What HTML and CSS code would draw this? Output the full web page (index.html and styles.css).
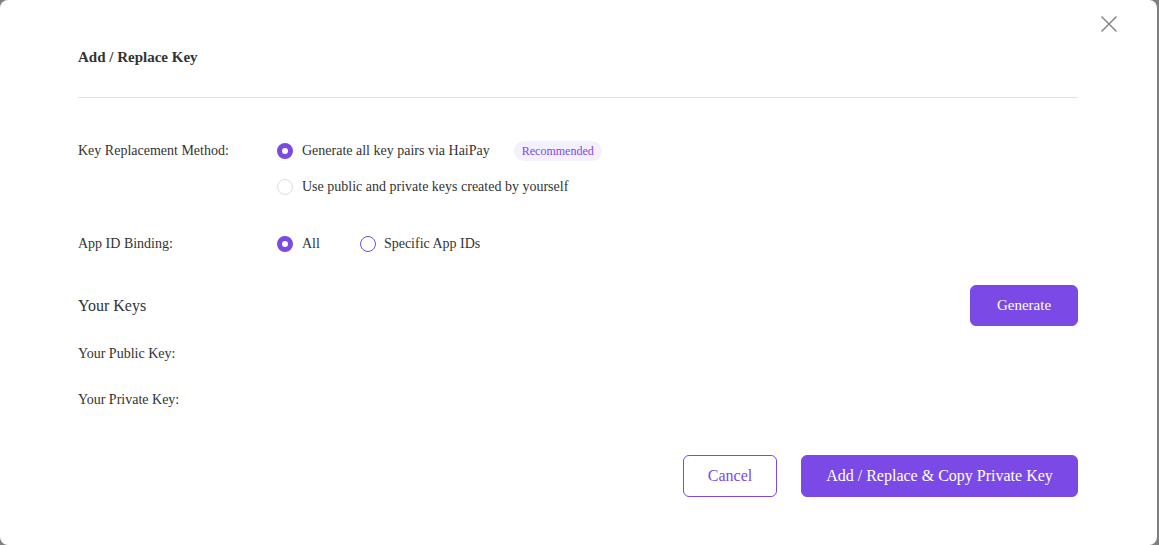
FILE: index.html
```html
<!DOCTYPE html>
<html>
<head>
<meta charset="utf-8">
<link rel="stylesheet" href="styles.css">
</head>
<body>
<div class="modal">
  <button class="close" aria-label="Close">
    <svg width="18" height="18" viewBox="0 0 18 18"><path d="M1.5 1.5 L16.5 16.5 M16.5 1.5 L1.5 16.5" stroke="#8a8a8a" stroke-width="1.6" fill="none"/></svg>
  </button>
  <div class="header">Add / Replace Key</div>

  <div class="form-row method">
    <div class="label">Key Replacement Method:</div>
    <div class="options vertical">
      <label class="option"><span class="radio checked"></span><span>Generate all key pairs via HaiPay</span><span class="badge">Recommended</span></label>
      <label class="option"><span class="radio light"></span><span>Use public and private keys created by yourself</span></label>
    </div>
  </div>

  <div class="form-row binding">
    <div class="label">App ID Binding:</div>
    <div class="options horizontal">
      <label class="option"><span class="radio checked"></span><span>All</span></label>
      <label class="option"><span class="radio"></span><span>Specific App IDs</span></label>
    </div>
  </div>

  <div class="keys-row">
    <div class="keys-title">Your Keys</div>
    <button class="btn primary gen">Generate</button>
  </div>
  <div class="key-line public">Your Public Key:</div>
  <div class="key-line private">Your Private Key:</div>

  <div class="footer">
    <button class="btn outline">Cancel</button>
    <button class="btn primary wide">Add / Replace &amp; Copy Private Key</button>
  </div>
</div>
</body>
</html>
```

FILE: styles.css
```css
html, body {
  margin: 0;
  padding: 0;
}
body {
  background: #7f7f7f;
  width: 1159px;
  height: 545px;
  overflow: hidden;
  font-family: "Liberation Serif", "Times New Roman", serif;
  color: #333;
}
.modal {
  position: relative;
  width: 1157px;
  height: 545px;
  background: #fff;
  border-radius: 8px;
  box-sizing: border-box;
  padding: 0 79px 0 78px;
}
.close {
  position: absolute;
  top: 15px;
  right: 39px;
  width: 18px;
  height: 18px;
  padding: 0;
  border: 0;
  background: none;
  line-height: 0;
}
.header {
  padding-top: 47px;
  padding-bottom: 30px;
  line-height: 20px;
  font-size: 15px;
  font-weight: bold;
  color: #333;
  border-bottom: 1px solid #e2e2e2;
}
.form-row {
  display: grid;
  grid-template-columns: 199px 1fr;
  font-size: 14px;
  line-height: 20px;
}
.method { margin-top: 43px; }
.binding { margin-top: 37px; }
.label { color: #333; }
.options.vertical {
  display: flex;
  flex-direction: column;
  gap: 16px;
}
.options.horizontal {
  display: flex;
  gap: 40px;
}
.option {
  display: flex;
  align-items: center;
  gap: 9px;
  color: #333;
}
.horizontal .option + .option { gap: 8px; }
.radio {
  width: 16px;
  height: 16px;
  box-sizing: border-box;
  border-radius: 50%;
  border: 1px solid #7b4ae2;
  background: #fff;
  flex: none;
}
.radio.light { border-color: #dcdcdc; }
.radio.checked {
  border: 5px solid #7b4ae2;
}
.badge {
  margin-left: 15px;
  height: 20px;
  line-height: 20px;
  padding: 0 8px;
  border-radius: 10px;
  background: #f4f0fd;
  color: #7b4ae2;
  font-size: 12px;
}
.keys-row {
  margin-top: 31px;
  display: flex;
  align-items: center;
  justify-content: space-between;
}
.keys-title {
  font-size: 16px;
  color: #333;
}
.btn {
  font-family: "Liberation Serif", "Times New Roman", serif;
  font-size: 16px;
  border-radius: 6px;
  box-sizing: border-box;
  cursor: pointer;
}
.btn.primary {
  background: #7b4ae6;
  color: #fff;
  border: 1px solid #7b4ae6;
}
.gen {
  width: 108px;
  height: 41px;
  font-size: 15px;
}
.key-line {
  font-size: 14px;
  line-height: 20px;
  color: #333;
}
.public { margin-top: 18px; }
.private { margin-top: 26px; }
.footer {
  margin-top: 45px;
  display: flex;
  justify-content: flex-end;
  gap: 24px;
}
.btn.outline {
  width: 94px;
  height: 42px;
  background: #fff;
  border: 1px solid #7b4ae6;
  color: #7b4ae6;
}
.btn.wide {
  width: 277px;
  height: 42px;
}
```
